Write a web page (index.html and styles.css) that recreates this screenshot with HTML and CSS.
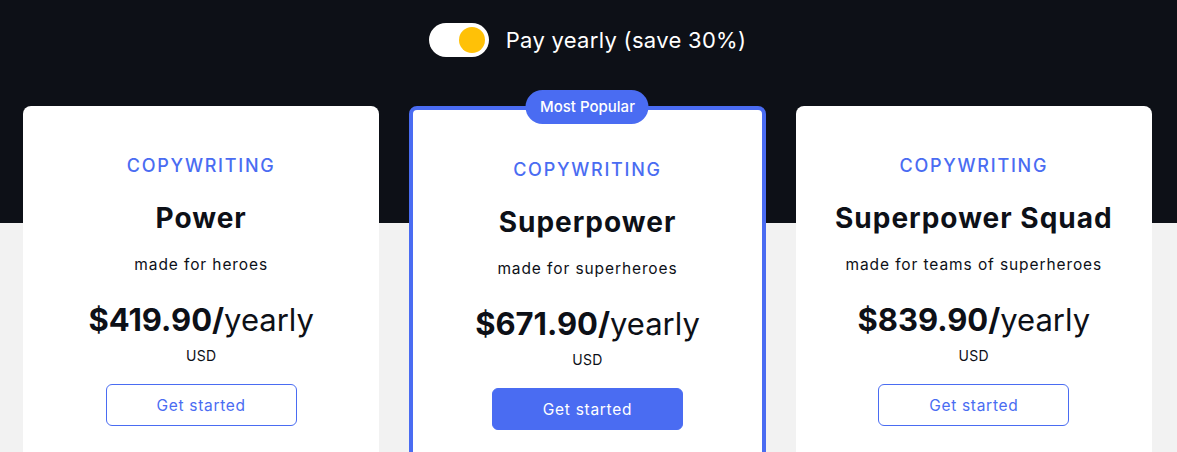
FILE: index.html
```html
<!DOCTYPE html>
<html lang="en">
<head>
<meta charset="utf-8">
<title>Pricing</title>
<link rel="stylesheet" href="styles.css">
</head>
<body>
<div class="page">
  <div class="toggle-row">
    <div class="switch"><span class="knob"></span></div>
    <span class="toggle-label">Pay yearly (save 30%)</span>
  </div>
  <div class="cards">
    <div class="card">
      <div class="eyebrow">COPYWRITING</div>
      <h2 class="title">Power</h2>
      <p class="sub">made for heroes</p>
      <div class="price"><strong>$419.90/</strong><span>yearly</span></div>
      <div class="cur">USD</div>
      <a class="btn">Get started</a>
    </div>
    <div class="card featured">
      <span class="badge">Most Popular</span>
      <div class="eyebrow">COPYWRITING</div>
      <h2 class="title">Superpower</h2>
      <p class="sub">made for superheroes</p>
      <div class="price"><strong>$671.90/</strong><span>yearly</span></div>
      <div class="cur">USD</div>
      <a class="btn primary">Get started</a>
    </div>
    <div class="card">
      <div class="eyebrow">COPYWRITING</div>
      <h2 class="title">Superpower Squad</h2>
      <p class="sub">made for teams of superheroes</p>
      <div class="price"><strong>$839.90/</strong><span>yearly</span></div>
      <div class="cur">USD</div>
      <a class="btn">Get started</a>
    </div>
  </div>
</div>
</body>
</html>
```
FILE: styles.css
```css
* { box-sizing: border-box; }
html, body { margin: 0; padding: 0; }
body {
  font-family: "Inter", "Liberation Sans", sans-serif;
  color: #0d1017;
  background: #f2f2f2;
  height: 452px;
  overflow: hidden;
}
.page {
  background: linear-gradient(#0d1017 0, #0d1017 223px, #f2f2f2 223px);
  min-height: 452px;
  padding-top: 23px;
}
.toggle-row {
  display: flex;
  align-items: center;
  justify-content: center;
  gap: 17px;
  height: 34px;
  padding-right: 2px;
}
.switch {
  width: 60px;
  height: 34px;
  border-radius: 17px;
  background: #ffffff;
  display: flex;
  align-items: center;
  justify-content: flex-end;
  padding-right: 4px;
}
.knob {
  width: 26px;
  height: 26px;
  border-radius: 50%;
  background: #ffc107;
}
.toggle-label {
  color: #ffffff;
  font-size: 22px;
  font-weight: 400;
  letter-spacing: 0.3px;
}
.cards {
  display: flex;
  gap: 30px;
  padding: 0 25px 0 23px;
  margin-top: 49px;
}
.card {
  position: relative;
  flex: none;
  width: calc((100% - 60px) / 3);
  height: 360px;
  background: #ffffff;
  border-radius: 8px;
  padding-top: 48px;
  display: flex;
  flex-direction: column;
  align-items: center;
  text-align: center;
}
.card.featured {
  border: 4px solid #4a6cf2;
}
.badge {
  position: absolute;
  top: -20px;
  left: 50%;
  transform: translateX(-50%);
  width: 123px;
  height: 34px;
  border-radius: 17px;
  background: #4a6cf2;
  color: #ffffff;
  font-size: 15px;
  font-weight: 500;
  line-height: 34px;
}
.eyebrow {
  color: #4a6cf2;
  font-size: 18px;
  line-height: 24px;
  letter-spacing: 1.75px;
  font-weight: 500;
}
.title {
  margin: 22px 0 0;
  font-size: 28px;
  line-height: 36px;
  font-weight: 700;
  letter-spacing: 1px;
}
.sub {
  margin: 19px 0 0;
  font-size: 15.5px;
  line-height: 20px;
  letter-spacing: 0.9px;
}
.price {
  margin-top: 25px;
  font-size: 31px;
  line-height: 40px;
}
.price strong { font-weight: 700; }
.price span { font-weight: 400; }
.cur {
  margin-top: 7px;
  font-size: 14px;
  line-height: 18px;
  letter-spacing: 0.3px;
}
.btn {
  margin-top: 19px;
  width: 191px;
  height: 42px;
  border: 1px solid #4a6cf2;
  border-radius: 6px;
  color: #4a6cf2;
  font-size: 15.5px;
  line-height: 41px;
  letter-spacing: 0.7px;
  display: block;
}
.btn.primary {
  background: #4a6cf2;
  color: #ffffff;
}
```
